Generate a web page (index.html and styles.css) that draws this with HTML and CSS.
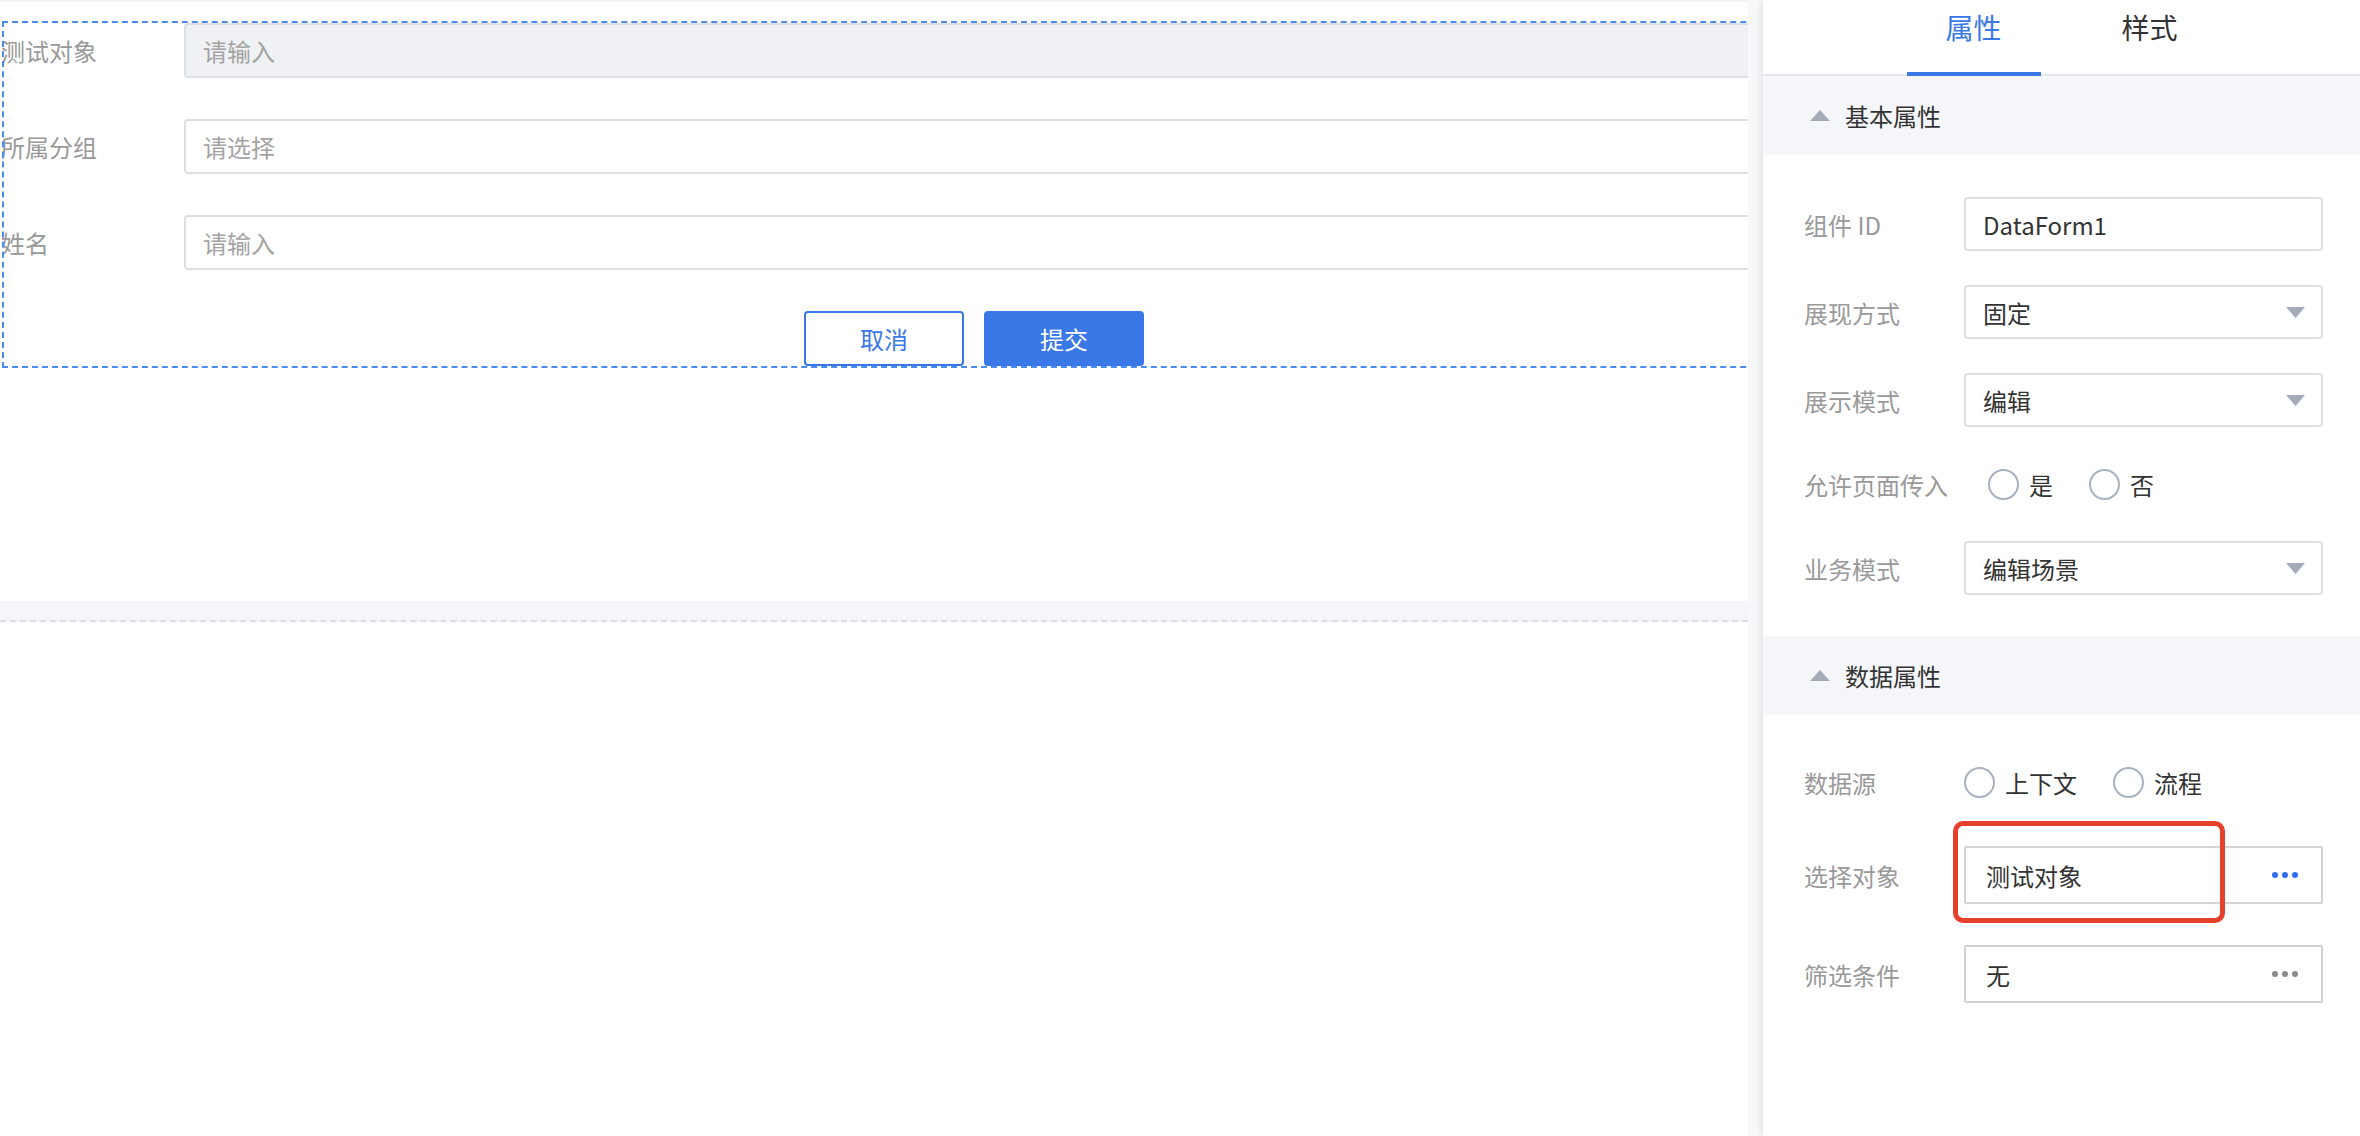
FILE: index.html
```html
<html>
    <head>
        <meta charset="utf-8">
        <meta name="viewport" content="width=device-width, initial-scale=1.0">
        <title>表单设计</title>
        <link rel="stylesheet" href="styles.css">
    </head>
    <body>
        <div class="page">
            <div class="canvas">
                <div class="canvas-top"></div>
                <div class="form">
                    <div class="form-row">
                        <span class="form-label">测试对象</span>
                        <div class="form-input disabled">请输入</div>
                    </div>
                    <div class="form-row">
                        <span class="form-label">所属分组</span>
                        <div class="form-input">请选择</div>
                    </div>
                    <div class="form-row">
                        <span class="form-label">姓名</span>
                        <div class="form-input">请输入</div>
                    </div>
                    <div class="form-actions">
                        <button class="btn btn-plain">取消</button>
                        <button class="btn btn-primary">提交</button>
                    </div>
                </div>
                <div class="canvas-band"></div>
            </div>
            <div class="gutter"></div>
            <div class="panel">
                <div class="tabs">
                    <div class="tab active">属性</div>
                    <div class="tab">样式</div>
                </div>

                <div class="section-head">
                    <svg class="caret" width="20" height="11" viewBox="0 0 20 11"><polygon points="10,0 20,11 0,11" fill="#a3aab8"/></svg>
                    <span>基本属性</span>
                </div>
                <div class="section-body">
                    <div class="prop-row">
                        <span class="prop-label">组件 ID</span>
                        <div class="prop-field">DataForm1</div>
                    </div>
                    <div class="prop-row">
                        <span class="prop-label">展现方式</span>
                        <div class="prop-field select">固定
                            <svg width="19" height="11" viewBox="0 0 19 11"><polygon points="0,0 19,0 9.5,11" fill="#a3aab8"/></svg>
                        </div>
                    </div>
                    <div class="prop-row">
                        <span class="prop-label">展示模式</span>
                        <div class="prop-field select">编辑
                            <svg width="19" height="11" viewBox="0 0 19 11"><polygon points="0,0 19,0 9.5,11" fill="#a3aab8"/></svg>
                        </div>
                    </div>
                    <div class="prop-row radio-row">
                        <span class="prop-label wide">允许页面传入</span>
                        <span class="radio"><i></i>是</span>
                        <span class="radio"><i></i>否</span>
                    </div>
                    <div class="prop-row">
                        <span class="prop-label">业务模式</span>
                        <div class="prop-field select">编辑场景
                            <svg width="19" height="11" viewBox="0 0 19 11"><polygon points="0,0 19,0 9.5,11" fill="#a3aab8"/></svg>
                        </div>
                    </div>
                </div>

                <div class="section-head">
                    <svg class="caret" width="20" height="11" viewBox="0 0 20 11"><polygon points="10,0 20,11 0,11" fill="#a3aab8"/></svg>
                    <span>数据属性</span>
                </div>
                <div class="section-body data">
                    <div class="prop-row radio-row">
                        <span class="prop-label">数据源</span>
                        <span class="radio"><i></i>上下文</span>
                        <span class="radio"><i></i>流程</span>
                    </div>
                    <div class="prop-row">
                        <span class="prop-label">选择对象</span>
                        <div class="prop-field picker">测试对象
                            <span class="dots blue"><b></b><b></b><b></b></span>
                            <span class="highlight"></span>
                        </div>
                    </div>
                    <div class="prop-row">
                        <span class="prop-label">筛选条件</span>
                        <div class="prop-field picker">无
                            <span class="dots"><b></b><b></b><b></b></span>
                        </div>
                    </div>
                </div>
            </div>
        </div>
    </body>
</html>
```

FILE: styles.css
```css
body {
    margin: 0;
    font-family: "Noto Sans CJK SC", "Noto Sans", sans-serif;
    background: #f7f8fa;
}
.page {
    display: flex;
    height: 1136px;
    overflow: hidden;
}

/* linke Arbeitsfläche */
.canvas {
    flex: 0 0 1748px;
    background: #fff;
    overflow: hidden;
}
.canvas-top {
    height: 2px;
    background: #f2f3f5;
}
.form {
    width: 1940px;
    margin: 21px 0 0 4px;
    outline: 2px dashed #4a8cf3;
    display: flex;
    flex-direction: column;
    gap: 41px;
}
.form-row {
    display: flex;
    align-items: center;
}
.form-label {
    flex: 0 0 183px;
    margin-left: -3px;
    font-size: 24px;
    color: #999;
}
.form-input {
    flex: 1;
    height: 55px;
    box-sizing: border-box;
    border: 2px solid #dcdfe6;
    border-radius: 4px;
    padding-left: 17px;
    display: flex;
    align-items: center;
    font-size: 24px;
    color: #a3a3a3;
}
.form-input.disabled {
    background: #f0f1f4;
}
.form-actions {
    display: flex;
    justify-content: center;
    gap: 20px;
}
.btn {
    width: 160px;
    height: 55px;
    box-sizing: border-box;
    border-radius: 4px;
    font-family: inherit;
    font-size: 24px;
}
.btn-plain {
    background: #fff;
    border: 2px solid #3b78e7;
    color: #3b78e7;
}
.btn-primary {
    background: #3a78e8;
    border: 2px solid #3a78e8;
    color: #fff;
}
.canvas-band {
    height: 19px;
    margin-top: 235px;
    background: #f5f6f9;
    border-bottom: 2px dashed #dcdde0;
}

.gutter {
    flex: 0 0 15px;
}

/* rechtes Panel */
.panel {
    flex: 1;
    background: #fff;
    box-shadow: -3px 0 6px rgba(0, 0, 0, 0.07);
}
.tabs {
    height: 76px;
    display: flex;
    justify-content: center;
    gap: 42px;
    box-shadow: inset 0 -2px 0 #e6e8ee;
}
.tab {
    width: 134px;
    height: 76px;
    box-sizing: border-box;
    padding-top: 7px;
    line-height: 40px;
    text-align: center;
    font-size: 28px;
    color: #333;
}
.tab.active {
    color: #3a78e8;
    border-bottom: 4px solid #3a78e8;
}
.section-head {
    height: 79px;
    background: #f5f6f9;
    display: flex;
    align-items: center;
    padding-left: 47px;
    font-size: 24px;
    color: #333;
}
.caret {
    margin-right: 15px;
}
.section-body {
    padding: 42px 37px 7px 41px;
}
.section-body.data {
    padding-top: 44px;
}
.prop-row {
    display: flex;
    align-items: center;
    margin-bottom: 34px;
}
.section-body.data .prop-row {
    margin-bottom: 41px;
}
.prop-label {
    flex: 0 0 160px;
    font-size: 24px;
    color: #999;
}
.prop-label.wide {
    flex-basis: 184px;
}
.prop-field {
    flex: 1;
    height: 54px;
    box-sizing: border-box;
    border: 2px solid #dcdfe6;
    border-radius: 4px;
    padding: 0 16px 0 17px;
    display: flex;
    align-items: center;
    justify-content: space-between;
    font-size: 24px;
    color: #333;
    position: relative;
}
.prop-field.picker {
    height: 58px;
    border-color: #d3d3d3;
    border-radius: 2px;
    padding: 0 23px 0 20px;
}
.radio-row {
    height: 46px;
}
.radio {
    display: flex;
    align-items: center;
    margin-right: 36px;
    font-size: 24px;
    color: #333;
}
.radio i {
    width: 31px;
    height: 31px;
    box-sizing: border-box;
    border: 2px solid #a9b1c0;
    border-radius: 50%;
    margin-right: 10px;
}
.dots {
    display: flex;
    gap: 4px;
}
.dots b {
    width: 6px;
    height: 6px;
    border-radius: 50%;
    background: #8a8a8a;
}
.dots.blue b {
    background: #2f6ef0;
}
.highlight {
    position: absolute;
    left: -13px;
    top: -27px;
    width: 272px;
    height: 102px;
    box-sizing: border-box;
    border: 5px solid #e5412d;
    border-radius: 10px;
}
```
